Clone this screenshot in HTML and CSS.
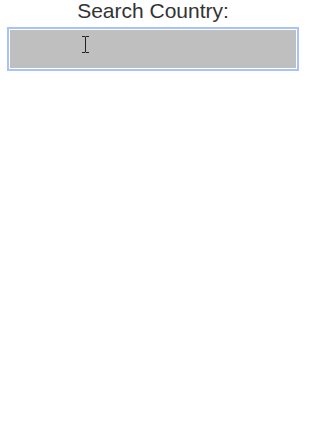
FILE: index.html
```html
<!DOCTYPE html>
<html>
<head>
<meta charset="utf-8">
<link rel="stylesheet" href="styles.css">
</head>
<body>
<div class="search">
  <label class="search-label" for="country">Search Country:</label>
  <input class="search-input" id="country" type="text">
</div>
<svg class="cursor" width="9" height="17" viewBox="0 0 9 17">
  <path d="M1 0.5h3l0.5 0.5 0.5-0.5h3M4.5 1v15M1 16.5h3l0.5-0.5 0.5 0.5h3" fill="none" stroke="#222" stroke-width="1"/>
</svg>
</body>
</html>
```
FILE: styles.css
```css
html, body {
  margin: 0;
  padding: 0;
  background: #ffffff;
}
body {
  font-family: "Liberation Sans", Arial, sans-serif;
  position: relative;
}
.search {
  width: 292px;
  margin-left: 7px;
  display: flex;
  flex-direction: column;
  gap: 6px;
}
.search-label {
  text-align: center;
  font-size: 21px;
  line-height: 21px;
  color: #333333;
}
.search-input {
  margin: 0;
  box-sizing: border-box;
  height: 44px;
  width: 100%;
  background: #bfbfbf;
  border: 2px solid #a6c3fb;
  box-shadow: inset 0 0 0 1px #ffffff;
  outline: none;
  padding: 0 8px;
  font-size: 16px;
}
.cursor {
  position: absolute;
  left: 81px;
  top: 36px;
}
```
